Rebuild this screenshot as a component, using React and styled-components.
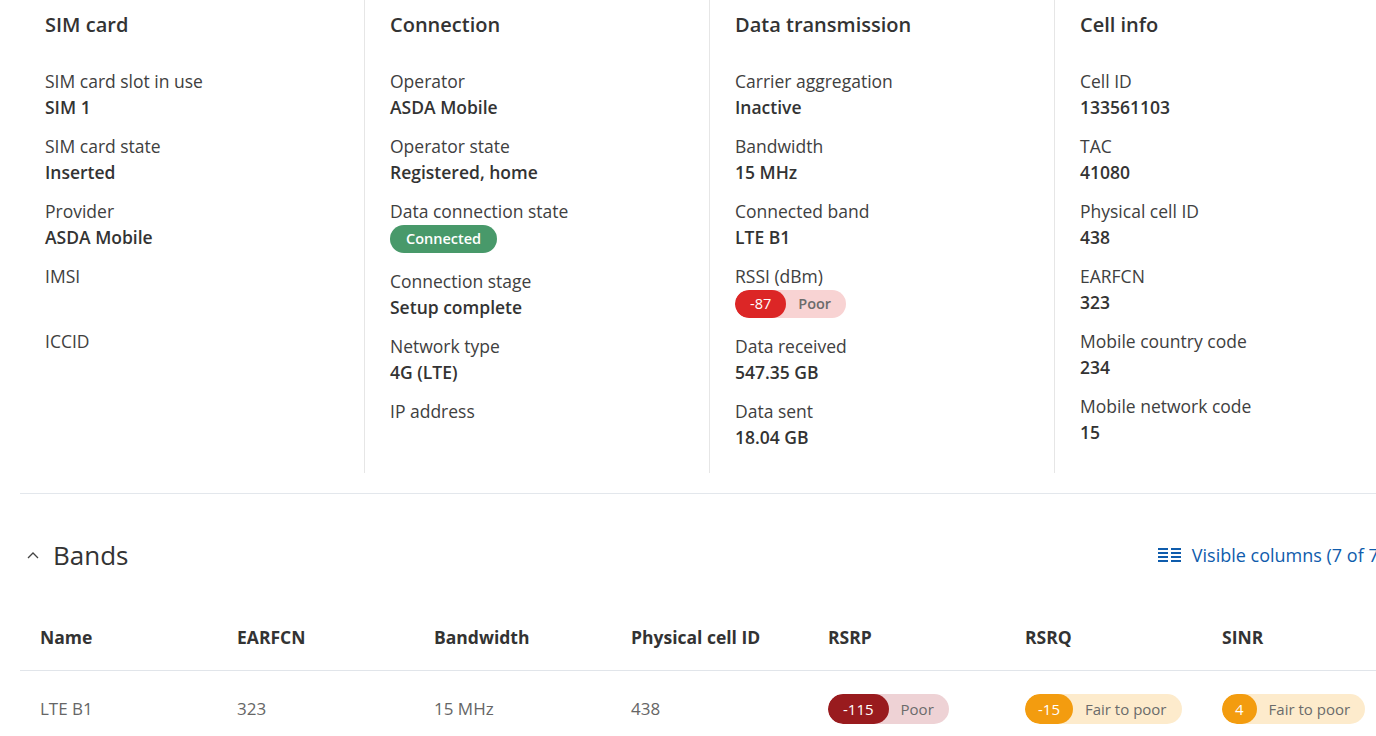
import React from "react";
import styled, { createGlobalStyle } from "styled-components";

const Global = createGlobalStyle`
  html, body {
    margin: 0;
    padding: 0;
    background: #fff;
    overflow: hidden;
  }
  body {
    font-family: "Open Sans", "Noto Sans", sans-serif;
    color: #333;
  }
`;

const Page = styled.div`
  width: 1400px;
  padding-left: 20px;
`;

const InfoGrid = styled.div`
  display: grid;
  grid-template-columns: repeat(4, 345px);
  border-bottom: 1px solid #e3e7ec;
  padding-bottom: 20px;
`;

const Column = styled.section`
  height: 473px;
  box-sizing: border-box;
  padding: 10px 25px 0;
  border-right: ${(p) => (p.$last ? "none" : "1px solid #e6e6e6")};
`;

const ColumnTitle = styled.h3`
  margin: 0 0 28px;
  font-size: 20px;
  line-height: 30px;
  font-weight: 600;
  color: #333;
`;

const Field = styled.div`
  margin-bottom: 13px;
`;

const Label = styled.div`
  font-size: 17.5px;
  line-height: 26px;
  color: #404040;
`;

const Value = styled.div`
  font-size: 17.5px;
  line-height: 26px;
  min-height: 26px;
  font-weight: 600;
  color: #333;
`;

const StatusBadge = styled.span`
  display: inline-block;
  vertical-align: top;
  margin: 1px 0 2px;
  padding: 0 16px;
  height: 28px;
  line-height: 28px;
  border-radius: 14px;
  background: #48996a;
  color: #fff;
  font-size: 14.5px;
  font-weight: 600;
`;

const palette = {
  red: { dark: "#dc2626", light: "#f8d3d3" },
  maroon: { dark: "#991b1e", light: "#eed2d5" },
  orange: { dark: "#f39c0f", light: "#fdebcc" },
};

const Meter = styled.span`
  display: inline-flex;
  vertical-align: top;
  margin: ${(p) => (p.$tall ? "0" : "1px 0 2px")};
  height: ${(p) => (p.$tall ? 30 : 28)}px;
  border-radius: 15px;
  overflow: hidden;
  background: ${(p) => palette[p.$tone].light};
  font-size: ${(p) => (p.$tall ? 15 : 14.5)}px;
  line-height: ${(p) => (p.$tall ? 30 : 28)}px;
`;

const MeterValue = styled.span`
  background: ${(p) => palette[p.$tone].dark};
  color: #fff;
  border-radius: 15px;
  padding: 0 ${(p) => p.$pad || 15}px;
  font-weight: 500;
`;

const MeterText = styled.span`
  color: #6b6b6b;
  padding: 0 15px 0 12px;
`;

const BandsHeader = styled.div`
  display: flex;
  align-items: center;
  justify-content: space-between;
  height: 38px;
  margin-top: 42px;
  padding-left: 7px;
  padding-right: 36px;
`;

const BandsTitle = styled.h2`
  display: flex;
  align-items: center;
  gap: 14px;
  margin: 0;
  font-size: 26px;
  font-weight: 400;
  color: #333;
`;

const ColumnsButton = styled.button`
  display: flex;
  align-items: center;
  gap: 10px;
  border: none;
  background: none;
  padding: 0;
  font-family: inherit;
  font-size: 18px;
  color: #0f5cac;
  cursor: pointer;
`;

const Table = styled.table`
  margin-top: 50px;
  border-collapse: collapse;
  width: 1379px;
  table-layout: fixed;
`;

const Th = styled.th`
  box-sizing: border-box;
  text-align: left;
  width: 197px;
  padding: 0 20px 20px;
  line-height: 26px;
  vertical-align: top;
  font-size: 17.5px;
  font-weight: 700;
  color: #333;
  border-bottom: 1px solid #e1e5ea;
`;

const Td = styled.td`
  padding: 23px 20px 0;
  font-size: 17px;
  line-height: 30px;
  color: #666;
  vertical-align: top;
  white-space: nowrap;
`;

const columns = [
  {
    title: "SIM card",
    fields: [
      ["SIM card slot in use", "SIM 1"],
      ["SIM card state", "Inserted"],
      ["Provider", "ASDA Mobile"],
      ["IMSI", ""],
      ["ICCID", ""],
    ],
  },
  {
    title: "Connection",
    fields: [
      ["Operator", "ASDA Mobile"],
      ["Operator state", "Registered, home"],
      ["Data connection state", <StatusBadge>Connected</StatusBadge>],
      ["Connection stage", "Setup complete"],
      ["Network type", "4G (LTE)"],
      ["IP address", ""],
    ],
  },
  {
    title: "Data transmission",
    fields: [
      ["Carrier aggregation", "Inactive"],
      ["Bandwidth", "15 MHz"],
      ["Connected band", "LTE B1"],
      [
        "RSSI (dBm)",
        <Meter $tone="red">
          <MeterValue $tone="red">-87</MeterValue>
          <MeterText>Poor</MeterText>
        </Meter>,
      ],
      ["Data received", "547.35 GB"],
      ["Data sent", "18.04 GB"],
    ],
  },
  {
    title: "Cell info",
    fields: [
      ["Cell ID", "133561103"],
      ["TAC", "41080"],
      ["Physical cell ID", "438"],
      ["EARFCN", "323"],
      ["Mobile country code", "234"],
      ["Mobile network code", "15"],
    ],
  },
];

const ChevronUp = () => (
  <svg width="12" height="8" viewBox="0 0 12 8" fill="none">
    <polyline points="1,7 6,2 11,7" stroke="#444" strokeWidth="1.3" />
  </svg>
);

const ColumnsIcon = () => (
  <svg width="24" height="16" viewBox="0 0 24 16" fill="#0f5cac">
    {[1, 5, 9, 13].map((y) => (
      <React.Fragment key={y}>
        <rect x="0" y={y} width="10" height="2" />
        <rect x="13" y={y} width="10" height="2" />
      </React.Fragment>
    ))}
  </svg>
);

const headers = ["Name", "EARFCN", "Bandwidth", "Physical cell ID", "RSRP", "RSRQ", "SINR"];

export default function App() {
  return (
    <Page>
      <Global />
      <InfoGrid>
        {columns.map((col, i) => (
          <Column key={col.title} $last={i === columns.length - 1}>
            <ColumnTitle>{col.title}</ColumnTitle>
            {col.fields.map(([label, value]) => (
              <Field key={label}>
                <Label>{label}</Label>
                <Value>{value}</Value>
              </Field>
            ))}
          </Column>
        ))}
      </InfoGrid>

      <BandsHeader>
        <BandsTitle>
          <ChevronUp />
          Bands
        </BandsTitle>
        <ColumnsButton>
          <ColumnsIcon />
          Visible columns (7 of 7)
        </ColumnsButton>
      </BandsHeader>

      <Table>
        <thead>
          <tr>
            {headers.map((h) => (
              <Th key={h}>{h}</Th>
            ))}
          </tr>
        </thead>
        <tbody>
          <tr>
            <Td>LTE B1</Td>
            <Td>323</Td>
            <Td>15 MHz</Td>
            <Td>438</Td>
            <Td>
              <Meter $tone="maroon" $tall>
                <MeterValue $tone="maroon">-115</MeterValue>
                <MeterText>Poor</MeterText>
              </Meter>
            </Td>
            <Td>
              <Meter $tone="orange" $tall>
                <MeterValue $tone="orange" $pad={13}>-15</MeterValue>
                <MeterText>Fair to poor</MeterText>
              </Meter>
            </Td>
            <Td>
              <Meter $tone="orange" $tall>
                <MeterValue $tone="orange" $pad={13}>4</MeterValue>
                <MeterText>Fair to poor</MeterText>
              </Meter>
            </Td>
          </tr>
        </tbody>
      </Table>
    </Page>
  );
}
